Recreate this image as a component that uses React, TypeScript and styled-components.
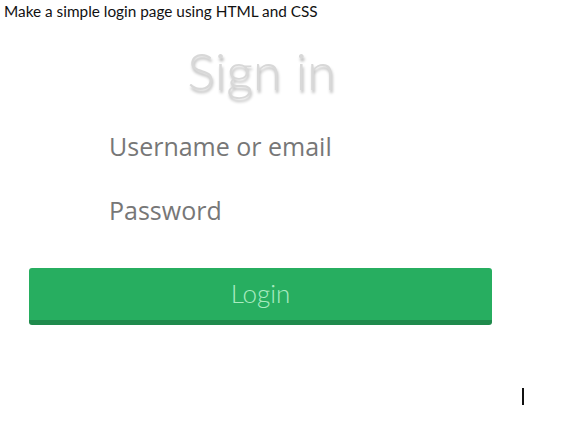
import React from "react";
import styled, { createGlobalStyle } from "styled-components";

const Global = createGlobalStyle`
  html, body { margin: 0; padding: 0; background: #ffffff; }
  body { width: 580px; height: 423px; overflow: hidden; }
`;

const Page = styled.div`
  position: relative;
  width: 580px;
  height: 423px;
  background: #fff;
  display: flex;
  flex-direction: column;
`;

const Prompt = styled.div`
  font-family: Lato, "Open Sans", sans-serif;
  font-size: 15.35px;
  line-height: 18px;
  color: #111;
  padding: 2px 0 0 4px;
`;

const Form = styled.form`
  width: 463px;
  margin: 20px 0 0 29px;
  display: flex;
  flex-direction: column;
`;

const Title = styled.h1`
  margin: 0 0 14px;
  text-align: center;
  font-family: Lato, "Open Sans", sans-serif;
  font-weight: 300;
  font-size: 52px;
  line-height: 60px;
  height: 60px;
  color: #d8d8d8;
  text-shadow: 1px 3px 3px rgba(0, 0, 0, 0.28);
  padding-left: 2px;
`;

const Field = styled.input`
  border: none;
  outline: none;
  background: transparent;
  font-family: "Open Sans", Lato, sans-serif;
  font-size: 25px;
  color: #666;
  padding: 0 0 0 80px;
  height: 64px;
  &::placeholder { color: #777; opacity: 1; }
`;

const Button = styled.button`
  margin-top: 26px;
  height: 57px;
  border: none;
  border-bottom: 5px solid #1f8a4c;
  border-radius: 3px;
  background: #27ae60;
  color: #a9ebc0;
  font-family: Lato, "Open Sans", sans-serif;
  font-weight: 300;
  font-size: 26px;
  padding: 0 0 2px;
  cursor: pointer;
`;

const Caret = styled.div`
  position: absolute;
  left: 522px;
  top: 388px;
  width: 2px;
  height: 17px;
  background: #111;
`;

export default function App() {
  return (
    <Page>
      <Global />
      <Prompt>Make a simple login page using HTML and CSS</Prompt>
      <Form onSubmit={(e) => e.preventDefault()}>
        <Title>Sign in</Title>
        <Field type="text" placeholder="Username or email" />
        <Field type="password" placeholder="Password" />
        <Button type="submit">Login</Button>
      </Form>
      <Caret />
    </Page>
  );
}
